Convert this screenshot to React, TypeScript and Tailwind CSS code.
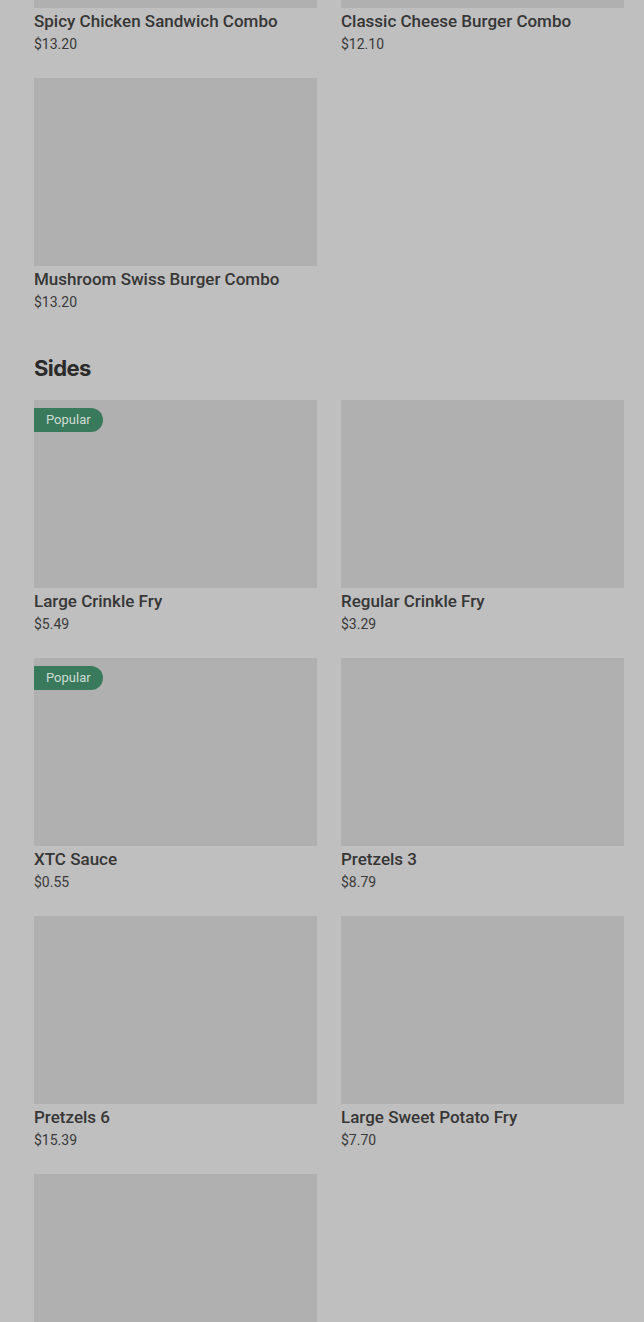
type Item = { name?: string; price?: string; popular?: boolean };

const combos: Item[] = [
  { name: 'Spicy Chicken Sandwich Combo', price: '$13.20' },
  { name: 'Classic Cheese Burger Combo', price: '$12.10' },
  { name: 'Mushroom Swiss Burger Combo', price: '$13.20' },
];

const sides: Item[] = [
  { name: 'Large Crinkle Fry', price: '$5.49', popular: true },
  { name: 'Regular Crinkle Fry', price: '$3.29' },
  { name: 'XTC Sauce', price: '$0.55', popular: true },
  { name: 'Pretzels 3', price: '$8.79' },
  { name: 'Pretzels 6', price: '$15.39' },
  { name: 'Large Sweet Potato Fry', price: '$7.70' },
  {}, // last one runs past the bottom of the screen
];

function MenuCard({ item }: { item: Item }) {
  return (
    <div className="flex flex-col">
      <div className="relative h-[188px] bg-[#b0b0b0]">
        {item.popular && (
          <span className="absolute left-0 top-2 flex h-6 items-center rounded-r-full bg-[#3a7a5c] pl-3 pr-3 text-[13px] text-[#cfdcd5]">
            Popular
          </span>
        )}
      </div>
      {item.name && (
        <>
          <p className="mt-[3px] text-[17px] leading-5 font-medium text-[#363636]">{item.name}</p>
          <p className="mt-[3px] text-sm leading-5 text-[#3a3a3a]">{item.price}</p>
        </>
      )}
    </div>
  );
}

export default function App() {
  return (
    <div className="h-[1322px] overflow-hidden bg-[#bfbfbf] font-['Roboto',sans-serif]">
      <div className="mt-[-180px] pl-[34px] pr-5">
        <div className="grid grid-cols-2 gap-x-6 gap-y-6">
          {combos.map((it, i) => (
            <MenuCard key={i} item={it} />
          ))}
        </div>
        <h2 className="mt-10 mb-4 text-[22px] leading-8 font-bold text-[#2b2b2b] font-['Inter',sans-serif] tracking-[-0.6px]">
          Sides
        </h2>
        <div className="grid grid-cols-2 gap-x-6 gap-y-6">
          {sides.map((it, i) => (
            <MenuCard key={i} item={it} />
          ))}
        </div>
      </div>
    </div>
  );
}
